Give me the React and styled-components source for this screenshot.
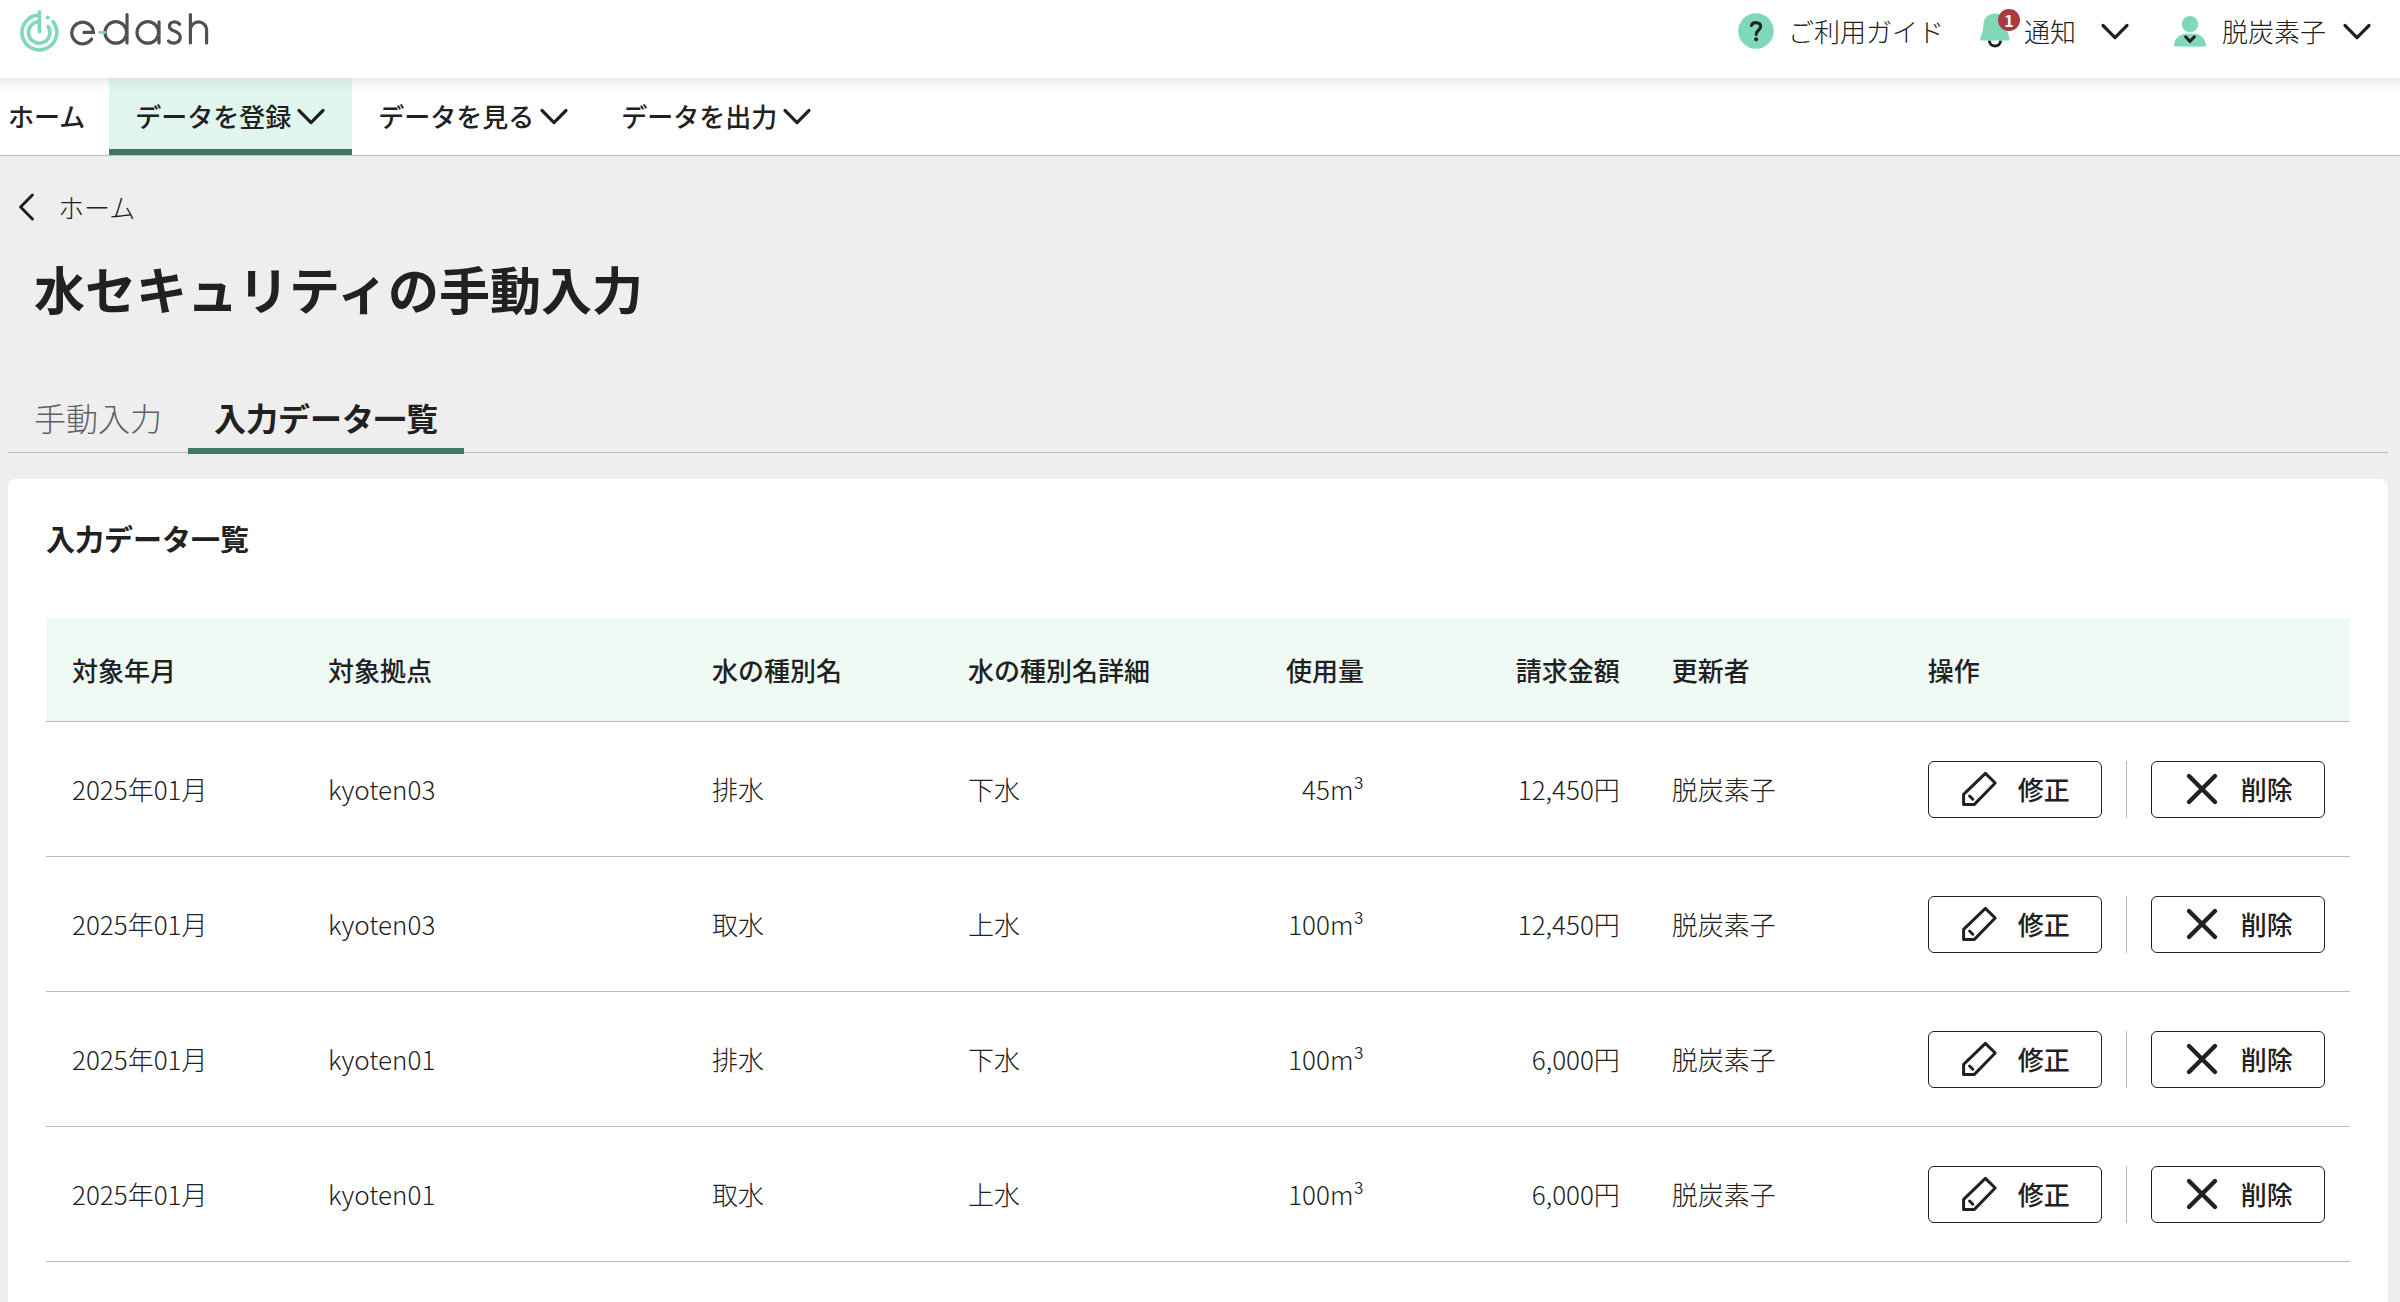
import React from 'react';
import styled, { createGlobalStyle } from 'styled-components';

// Colors
const TEXT = '#212121';
const MINT = '#7fd8b8';
const GREEN = '#457564';
const LINE = '#bdbdbd';

// Data
const rows = [
  { id: 1, month: '2025年01月', site: 'kyoten03', type: '排水', detail: '下水', usage: '45', price: '12,450円', user: '脱炭素子' },
  { id: 2, month: '2025年01月', site: 'kyoten03', type: '取水', detail: '上水', usage: '100', price: '12,450円', user: '脱炭素子' },
  { id: 3, month: '2025年01月', site: 'kyoten01', type: '排水', detail: '下水', usage: '100', price: '6,000円', user: '脱炭素子' },
  { id: 4, month: '2025年01月', site: 'kyoten01', type: '取水', detail: '上水', usage: '100', price: '6,000円', user: '脱炭素子' },
];

// Style
const GlobalStyle = createGlobalStyle`
  *, *::before, *::after {
    box-sizing: border-box;
  }

  body {
    margin: 0;
    background: #eeeeee;
    color: ${TEXT};
    font-family: "Noto Sans CJK JP", sans-serif;
    font-size: 26px;
    font-weight: 300;
    line-height: 38px;
  }

  button {
    margin: 0;
    color: inherit;
    font: inherit;
    cursor: pointer;
  }

  a {
    color: inherit;
    text-decoration: none;
  }

  svg {
    display: block;
    flex: none;
  }
`;

const Page = styled.div`
  display: flex;
  flex-direction: column;
  min-height: 100vh;
`;

const Header = styled.header`
  display: flex;
  justify-content: space-between;
  height: 78px;
  padding: 0 28px 16px 20px;
  background: #ffffff;
`;

const LogoLink = styled.a`
  display: flex;
  align-items: center;
`;

const HeaderMenu = styled.div`
  display: flex;
  align-items: center;
  gap: 36px;

  > :last-child {
    margin-left: 8px;
  }
`;

const HeaderButton = styled.button`
  display: flex;
  align-items: center;
  gap: ${props => props.$gap || 14}px;
  padding: 0;
  border: 0;
  background: none;
`;

const HeaderLabel = styled.span`
  margin-right: ${props => props.$space || 0}px;
`;

const BellWrapper = styled.span`
  position: relative;
  display: block;
`;

const Badge = styled.span`
  position: absolute;
  top: -4px;
  right: -10px;
  width: 22px;
  height: 22px;
  border-radius: 50%;
  background: #a93a3f;
  color: #ffffff;
  font-size: 16px;
  font-weight: 700;
  line-height: 22px;
  text-align: center;
`;

const Nav = styled.nav`
  display: flex;
  height: 78px;
  border-bottom: 1px solid ${LINE};
  background: #ffffff;
  box-shadow: inset 0 16px 16px -16px rgba(0, 0, 0, 0.16);
`;

const NavItem = styled.button`
  display: flex;
  align-items: center;
  gap: 5px;
  padding: ${props => (props.$first ? '10px 24px 6px 8px' : '10px 26px 6px')};
  border: 0;
  border-bottom: 6px solid ${props => (props.$active ? GREEN : 'transparent')};
  background: ${props => (props.$active ? 'rgba(127, 216, 184, 0.25)' : 'none')};
  font-weight: 500;
`;

const Main = styled.main`
  display: flex;
  flex: 1;
  flex-direction: column;
  padding: 32px 12px 0 8px;
`;

const BackLink = styled.a`
  display: flex;
  align-items: center;
  align-self: flex-start;
  gap: 24px;
  padding-left: 10px;
`;

const Title = styled.h1`
  margin: 24px 26px 0;
  font-size: 51px;
  font-weight: 700;
  line-height: 76px;
`;

const TabList = styled.div`
  display: flex;
  margin-top: 60px;
  border-bottom: 1px solid ${LINE};
`;

const Tab = styled.button`
  height: 68px;
  margin-bottom: -2px;
  padding: 0 26px;
  border: 0;
  border-bottom: 6px solid ${props => (props.$active ? GREEN : 'transparent')};
  background: none;
  color: ${props => (props.$active ? TEXT : '#616161')};
  font-size: 32px;
  font-weight: ${props => (props.$active ? 700 : 300)};
`;

const Card = styled.section`
  flex: 1;
  margin-top: 26px;
  padding: 38px 38px 24px;
  border-radius: 8px 8px 0 0;
  background: #ffffff;
`;

const CardTitle = styled.h2`
  margin: 0 0 58px;
  font-size: 29px;
  font-weight: 700;
  line-height: 43px;
`;

const Table = styled.table`
  width: 100%;
  border-collapse: separate;
  border-spacing: 0;
  table-layout: fixed;
`;

const HeadCell = styled.th`
  width: ${props => props.$width}%;
  height: 104px;
  padding: 0 26px;
  border-bottom: 1px solid ${LINE};
  background: #f0faf5;
  font-weight: 500;
  text-align: ${props => (props.$right ? 'right' : 'left')};
`;

const Cell = styled.td`
  height: 135px;
  padding: 0 26px;
  border-bottom: 1px solid ${LINE};
  text-align: ${props => (props.$right ? 'right' : 'left')};
`;

const Actions = styled.div`
  display: flex;
  align-items: stretch;
  gap: 24px;
`;

const Divider = styled.span`
  flex: none;
  width: 1px;
  background: ${LINE};
`;

const ActionButton = styled.button`
  display: flex;
  flex: none;
  align-items: center;
  justify-content: center;
  gap: 20px;
  width: 174px;
  height: 57px;
  padding: 0;
  border: 1px solid ${TEXT};
  border-radius: 6px;
  background: #ffffff;
  font-weight: 500;
`;

// Icons
const Logo = () => (
  <svg width="190" height="44" viewBox="0 0 190 44" fill="none" strokeLinecap="round" role="img" aria-label="e-dash">
    <g stroke={MINT} strokeWidth="3.6">
      <path d="M19.4 6.1A17.4 17.4 0 1 0 33 12.7" />
      <path d="M19.4 12.8A10.7 10.7 0 1 0 28 17.4" />
      <path d="M19.4 2.8V22.8" />
    </g>
    <circle cx="27.7" cy="8.5" r="2" fill={MINT} />
    <g stroke="#505050" strokeWidth="3.2">
      <path d="M64 23.4H73.4A10.8 10.8 0 1 0 71.6 30" />
      <circle cx="95.8" cy="23.4" r="10.8" />
      <path d="M107 5.6V34" />
      <circle cx="127.8" cy="23.4" r="10.8" />
      <path d="M139 12.8V34" />
      <path d="M159.6 15.2C157 11.8 149.4 12 149.4 17.4C149.4 23 160.2 21.2 160.2 28C160.2 35 151 35.2 148.4 32" />
      <path d="M170.4 5.6V34M170.4 21.6C170.4 10 186.6 10 186.6 21.6V34" />
    </g>
    <path d="M79.4 23.4H84.8" stroke={MINT} strokeWidth="2.6" />
  </svg>
);

const ChevronDown = () => (
  <svg width="30" height="30" viewBox="0 0 30 30" fill="none" stroke={TEXT} strokeWidth="3.2" strokeLinecap="round" strokeLinejoin="round">
    <path d="M3 9.5L15 21.6L27 9.5" />
  </svg>
);

const ChevronLeft = () => (
  <svg width="16" height="28" viewBox="0 0 16 28" fill="none" stroke={TEXT} strokeWidth="3" strokeLinecap="round" strokeLinejoin="round">
    <path d="M14.4 2L2.6 14L14.4 26" />
  </svg>
);

const HelpIcon = () => (
  <svg width="36" height="36" viewBox="0 0 36 36" fill="none">
    <circle cx="18" cy="18" r="17.8" fill={MINT} />
    <path d="M13.4 12.6C14.6 8.4 22.8 8.6 22.6 13.6C22.5 17 18.4 17.4 18.2 21.4" stroke={TEXT} strokeWidth="3" strokeLinecap="round" />
    <circle cx="18.1" cy="26.2" r="2" fill={TEXT} />
  </svg>
);

const BellIcon = () => (
  <svg width="30" height="36" viewBox="0 0 30 36" fill="none">
    <path d="M9.4 27.4C9.4 34.8 20.6 34.8 20.6 27.4" stroke={TEXT} strokeWidth="3" />
    <path d="M15 .4C8 .4 3.4 5.4 3.4 12C3.4 20 .4 22 .4 26.4Q.4 27.6 1.8 27.6H28.2Q29.6 27.6 29.6 26.4C29.6 22 26.6 20 26.6 12C26.6 5.4 22 .4 15 .4Z" fill={MINT} />
  </svg>
);

const UserIcon = () => (
  <svg width="32" height="32" viewBox="0 0 32 32" fill="none">
    <circle cx="16" cy="9.2" r="8.2" fill={MINT} />
    <path d="M0 31.4C0 24 5.4 18.8 12 18.8H20C26.6 18.8 32 24 32 31.4Z" fill={MINT} />
    <path d="M11.6 21.8L16 26.4L20.4 21.8" stroke={TEXT} strokeWidth="3" strokeLinecap="round" />
  </svg>
);

const PencilIcon = () => (
  <svg width="38" height="38" viewBox="0 0 38 38" fill="none" stroke={TEXT} strokeWidth="3" strokeLinecap="round" strokeLinejoin="round">
    <path d="M25.4 3.4L35.2 13L14.4 34.4H3.6V24.4Z" />
    <path d="M9.6 26L12.8 29.2" />
  </svg>
);

const CloseIcon = () => (
  <svg width="38" height="38" viewBox="0 0 38 38" fill="none" stroke={TEXT} strokeWidth="4.4" strokeLinecap="round">
    <path d="M6 6L32 32M32 6L6 32" />
  </svg>
);

const DataTable = ({ items }) => (
  <Table>
    <thead>
      <tr>
        <HeadCell $width={11.11}>対象年月</HeadCell>
        <HeadCell $width={16.67}>対象拠点</HeadCell>
        <HeadCell $width={11.11}>水の種別名</HeadCell>
        <HeadCell $width={11.11}>水の種別名詳細</HeadCell>
        <HeadCell $width={8.33} $right>使用量</HeadCell>
        <HeadCell $width={11.11} $right>請求金額</HeadCell>
        <HeadCell $width={11.11}>更新者</HeadCell>
        <HeadCell $width={19.45}>操作</HeadCell>
      </tr>
    </thead>
    <tbody>
      {items.map(item => (
        <tr key={item.id}>
          <Cell>{item.month}</Cell>
          <Cell>{item.site}</Cell>
          <Cell>{item.type}</Cell>
          <Cell>{item.detail}</Cell>
          <Cell $right>{item.usage}m³</Cell>
          <Cell $right>{item.price}</Cell>
          <Cell>{item.user}</Cell>
          <Cell>
            <Actions>
              <ActionButton type="button"><PencilIcon />修正</ActionButton>
              <Divider />
              <ActionButton type="button"><CloseIcon />削除</ActionButton>
            </Actions>
          </Cell>
        </tr>
      ))}
    </tbody>
  </Table>
);

const App = () => (
  <Page>
    <GlobalStyle />

    <Header>
      <LogoLink href="#"><Logo /></LogoLink>
      <HeaderMenu>
        <HeaderButton type="button"><HelpIcon />ご利用ガイド</HeaderButton>
        <HeaderButton type="button">
          <BellWrapper>
            <BellIcon />
            <Badge>1</Badge>
          </BellWrapper>
          <HeaderLabel $space={10}>通知</HeaderLabel>
          <ChevronDown />
        </HeaderButton>
        <HeaderButton type="button" $gap={16}>
          <UserIcon />
          <HeaderLabel>脱炭素子</HeaderLabel>
          <ChevronDown />
        </HeaderButton>
      </HeaderMenu>
    </Header>

    <Nav>
      <NavItem type="button" $first>ホーム</NavItem>
      <NavItem type="button" $active>データを登録<ChevronDown /></NavItem>
      <NavItem type="button">データを見る<ChevronDown /></NavItem>
      <NavItem type="button">データを出力<ChevronDown /></NavItem>
    </Nav>

    <Main>
      <BackLink href="#"><ChevronLeft />ホーム</BackLink>
      <Title>水セキュリティの手動入力</Title>

      <TabList role="tablist">
        <Tab type="button" role="tab" aria-selected="false">手動入力</Tab>
        <Tab type="button" role="tab" aria-selected="true" $active>入力データ一覧</Tab>
      </TabList>

      <Card>
        <CardTitle>入力データ一覧</CardTitle>
        <DataTable items={rows} />
      </Card>
    </Main>
  </Page>
);

export default App;
